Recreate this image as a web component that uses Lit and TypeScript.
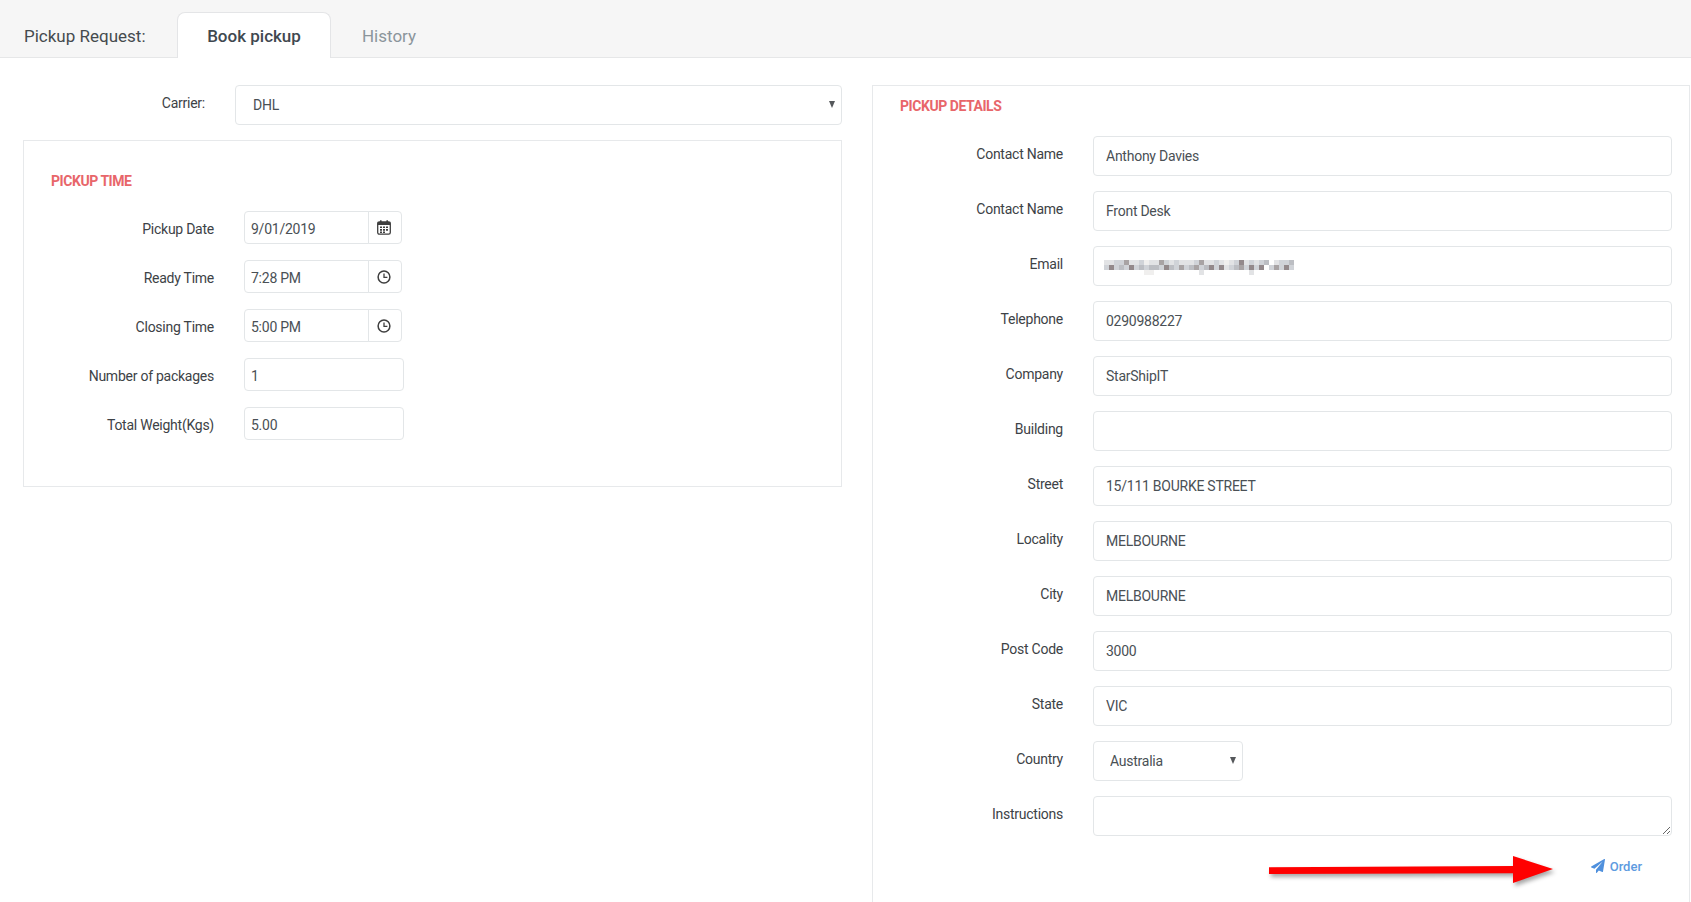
import { LitElement, css, html, svg } from 'lit';
import { customElement } from 'lit/decorators.js';

// left column rows: addon is 'cal', 'clock' or nothing
const timeRows = [
  { label: 'Pickup Date', value: '9/01/2019', addon: 'cal' },
  { label: 'Ready Time', value: '7:28 PM', addon: 'clock' },
  { label: 'Closing Time', value: '5:00 PM', addon: 'clock' },
  { label: 'Number of packages', value: '1', addon: '' },
  { label: 'Total Weight(Kgs)', value: '5.00', addon: '' },
];

const detailRows = [
  { label: 'Contact Name', value: 'Anthony Davies' },
  { label: 'Contact Name', value: 'Front Desk' },
  { label: 'Email', value: '', blur: true },
  { label: 'Telephone', value: '0290988227' },
  { label: 'Company', value: 'StarShipIT' },
  { label: 'Building', value: '' },
  { label: 'Street', value: '15/111 BOURKE STREET' },
  { label: 'Locality', value: 'MELBOURNE' },
  { label: 'City', value: 'MELBOURNE' },
  { label: 'Post Code', value: '3000' },
  { label: 'State', value: 'VIC' },
];

// pixelated email, one string per 5px row, digit = darkness (0 is blank)
const blurRows = [
  '22335223122532322235223212362323402334',
  '36343634344364353453463623453636035363',
  '00000000110000000002000000000200000000',
];
const blurColours = ['#ffffff', '#f0efee', '#e2e3e5', '#d0d3d8', '#bcbec3', '#a8a3a4', '#93898b'];

const calendarIcon = html`<svg width="14" height="15" viewBox="0 0 14 15">
  <rect x="0.7" y="2" width="12.6" height="12.2" rx="1.6" fill="none" stroke="#3f3f3f" stroke-width="1.3"/>
  <rect x="0.7" y="2" width="12.6" height="3" fill="#3f3f3f"/>
  <rect x="3" y="0.3" width="1.6" height="3" fill="#3f3f3f"/>
  <rect x="9.4" y="0.3" width="1.6" height="3" fill="#3f3f3f"/>
  <path d="M3 6.4h2v1.7H3zM6 6.4h2v1.7H6zM9 6.4h2v1.7H9zM3 9h2v1.7H3zM6 9h2v1.7H6zM9 9h2v1.7H9zM3 11.4h2v1.6H3zM6 11.4h2v1.6H6z" fill="#3f3f3f"/>
</svg>`;

const clockIcon = html`<svg class="clock" width="14" height="14" viewBox="0 0 14 14">
  <circle cx="7" cy="7" r="5.9" fill="none" stroke="#3f3f3f" stroke-width="1.5"/>
  <path d="M7 3.6V7.4H10.4" fill="none" stroke="#3f3f3f" stroke-width="1.3"/>
</svg>`;

@customElement('app-root')
export class AppRoot extends LitElement {
  static styles = css`
    :host {
      display: block;
      height: 100vh;
      overflow: hidden;
      position: relative;
      background: #fff;
      font-family: Roboto, 'Liberation Sans', sans-serif;
      font-size: 14px;
      letter-spacing: -0.25px;
      color: #3d4246;
    }
    * {
      box-sizing: border-box;
    }

    .top {
      display: flex;
      align-items: flex-end;
      height: 58px;
      padding-left: 24px;
      background: #f6f6f6;
      border-bottom: 1px solid #e6e7e8;
      font-size: 17px;
      letter-spacing: 0;
    }
    .page-title {
      width: 153px;
      line-height: 42px;
      color: #454a4e;
    }
    .tab {
      height: 46px;
      margin-bottom: -1px;
      line-height: 46px;
      text-align: center;
      border: 1px solid transparent;
      border-bottom: none;
    }
    .tab.active {
      width: 154px;
      background: #fff;
      border-color: #e4e5e7;
      border-radius: 8px 8px 0 0;
      font-weight: 500;
      color: #3f4850;
    }
    .tab.other {
      width: 116px;
      color: #8b959b;
    }

    .main {
      display: grid;
      grid-template-columns: 819px 818px;
      column-gap: 30px;
      padding: 27px 0 0 23px;
    }
    .left {
      display: flex;
      flex-direction: column;
      gap: 15px;
    }

    .carrier {
      display: flex;
      gap: 30px;
    }
    .carrier label {
      width: 182px;
      padding-top: 8px;
      line-height: 20px;
      text-align: right;
    }
    .carrier .select-wrap {
      flex: 1;
    }
    .carrier select {
      padding-left: 17px;
    }

    .box {
      border: 1px solid #e7e9eb;
    }
    .time-box {
      height: 347px;
      padding: 30px 27px 0;
    }
    .details-box {
      height: 830px;
      padding: 10px 17px 0 27px;
    }
    h3 {
      margin: 0 0 20px;
      font-size: 14px;
      letter-spacing: -0.45px;
      line-height: 20px;
      font-weight: 700;
      color: #e8666a;
    }

    .rows {
      display: flex;
      flex-direction: column;
    }
    .time-box .rows {
      gap: 16px;
    }
    .details-box .rows {
      gap: 15px;
    }

    .row {
      display: flex;
    }
    .row label {
      flex: none;
      width: 163px;
      margin-right: 30px;
      padding-top: 8px;
      line-height: 20px;
      text-align: right;
      color: #3d4246;
    }

    input,
    select,
    textarea {
      display: block;
      font: inherit;
      letter-spacing: inherit;
      color: #4a5055;
      background: #fff;
      border: 1px solid #e3e6e8;
      border-radius: 4px;
      outline: none;
    }
    .time-box input {
      height: 33px;
      width: 160px;
      padding: 2px 6px 0;
    }
    .details-box input {
      height: 40px;
      width: 100%;
      padding: 0 12px;
    }
    textarea {
      height: 40px;
      width: 100%;
      padding: 8px 12px;
    }

    .group {
      display: flex;
      width: 158px;
    }
    .time-box .group input {
      width: 125px;
      border-radius: 4px 0 0 4px;
    }
    .addon {
      flex: 1;
      height: 33px;
      display: flex;
      justify-content: center;
      padding: 8px 2px 0 0;
      margin-left: -1px;
      border: 1px solid #e3e6e8;
      border-radius: 0 4px 4px 0;
    }
    .clock {
      margin-top: 1px;
    }

    .select-wrap {
      position: relative;
      height: 40px;
    }
    .select-wrap select {
      appearance: none;
      width: 100%;
      height: 40px;
      padding: 0 16px;
    }
    .select-wrap::after {
      content: '';
      position: absolute;
      top: 16px;
      right: 7px;
      border-left: 3px solid transparent;
      border-right: 3px solid transparent;
      border-top: 7px solid #55585b;
      pointer-events: none;
    }
    .carrier .select-wrap select {
      padding-left: 17px;
    }
    .country {
      width: 150px;
    }

    .field {
      position: relative;
      flex: 1;
    }
    .blur {
      position: absolute;
      left: 11px;
      top: 14px;
    }

    .order-row {
      display: flex;
      justify-content: flex-end;
      padding: 20px 30px 0 0;
    }
    .order {
      display: flex;
      align-items: center;
      gap: 5px;
      height: 20px;
      font-size: 13px;
      letter-spacing: 0;
      font-weight: 500;
      color: #5d9be0;
    }

    .pointer {
      position: absolute;
      left: 1262px;
      top: 850px;
      filter: drop-shadow(2px 3px 2px rgba(0, 0, 0, 0.35));
    }
  `;

  private renderAddon(kind: string) {
    return html`<div class="addon">${kind === 'cal' ? calendarIcon : clockIcon}</div>`;
  }

  private renderBlur() {
    return html`<svg class="blur" width="190" height="15" viewBox="0 0 190 15">
      ${blurRows.map((row, y) =>
        [...row].map((d, x) =>
          d === '0'
            ? ''
            : svg`<rect x=${x * 5} y=${y * 5} width="5" height="5" fill=${blurColours[Number(d)]}></rect>`
        )
      )}
    </svg>`;
  }

  render() {
    return html`
      <div class="top">
        <div class="page-title">Pickup Request:</div>
        <div class="tab active">Book pickup</div>
        <div class="tab other">History</div>
      </div>

      <div class="main">
        <div class="left">
          <div class="carrier">
            <label>Carrier:</label>
            <div class="select-wrap">
              <select><option>DHL</option></select>
            </div>
          </div>

          <div class="box time-box">
            <h3>PICKUP TIME</h3>
            <div class="rows">
              ${timeRows.map(
                (r) => html`
                  <div class="row">
                    <label>${r.label}</label>
                    ${r.addon
                      ? html`<div class="group">
                          <input .value=${r.value} />
                          ${this.renderAddon(r.addon)}
                        </div>`
                      : html`<input .value=${r.value} />`}
                  </div>
                `
              )}
            </div>
          </div>
        </div>

        <div class="box details-box">
          <h3>PICKUP DETAILS</h3>
          <div class="rows">
            ${detailRows.map(
              (r) => html`
                <div class="row">
                  <label>${r.label}</label>
                  <div class="field">
                    <input .value=${r.value} />
                    ${r.blur ? this.renderBlur() : ''}
                  </div>
                </div>
              `
            )}
            <div class="row">
              <label>Country</label>
              <div class="select-wrap country">
                <select><option>Australia</option></select>
              </div>
            </div>
            <div class="row">
              <label>Instructions</label>
              <div class="field"><textarea></textarea></div>
            </div>
          </div>
          <div class="order-row">
            <div class="order">
              <svg width="14" height="14" viewBox="0 0 1792 1792">
                <path
                  fill="#4f90dd"
                  d="M1764 11q33 24 27 64l-256 1536q-5 29-32 45-14 8-31 8-11 0-24-5l-453-185-242 295q-18 23-49 23-13 0-22-4-19-7-30.5-23.5t-11.5-36.5v-349l864-1059-1069 925-395-162q-37-14-40-55-2-40 32-59l1664-960q15-9 32-9 20 0 36 11z"
                />
              </svg>
              Order
            </div>
          </div>
        </div>
      </div>

      <svg class="pointer" width="300" height="40" viewBox="0 0 300 40">
        <path d="M7 17.3L251 16V6L291 19L251 33V23.3L7 24Z" fill="#ff0000" />
      </svg>
    `;
  }
}
